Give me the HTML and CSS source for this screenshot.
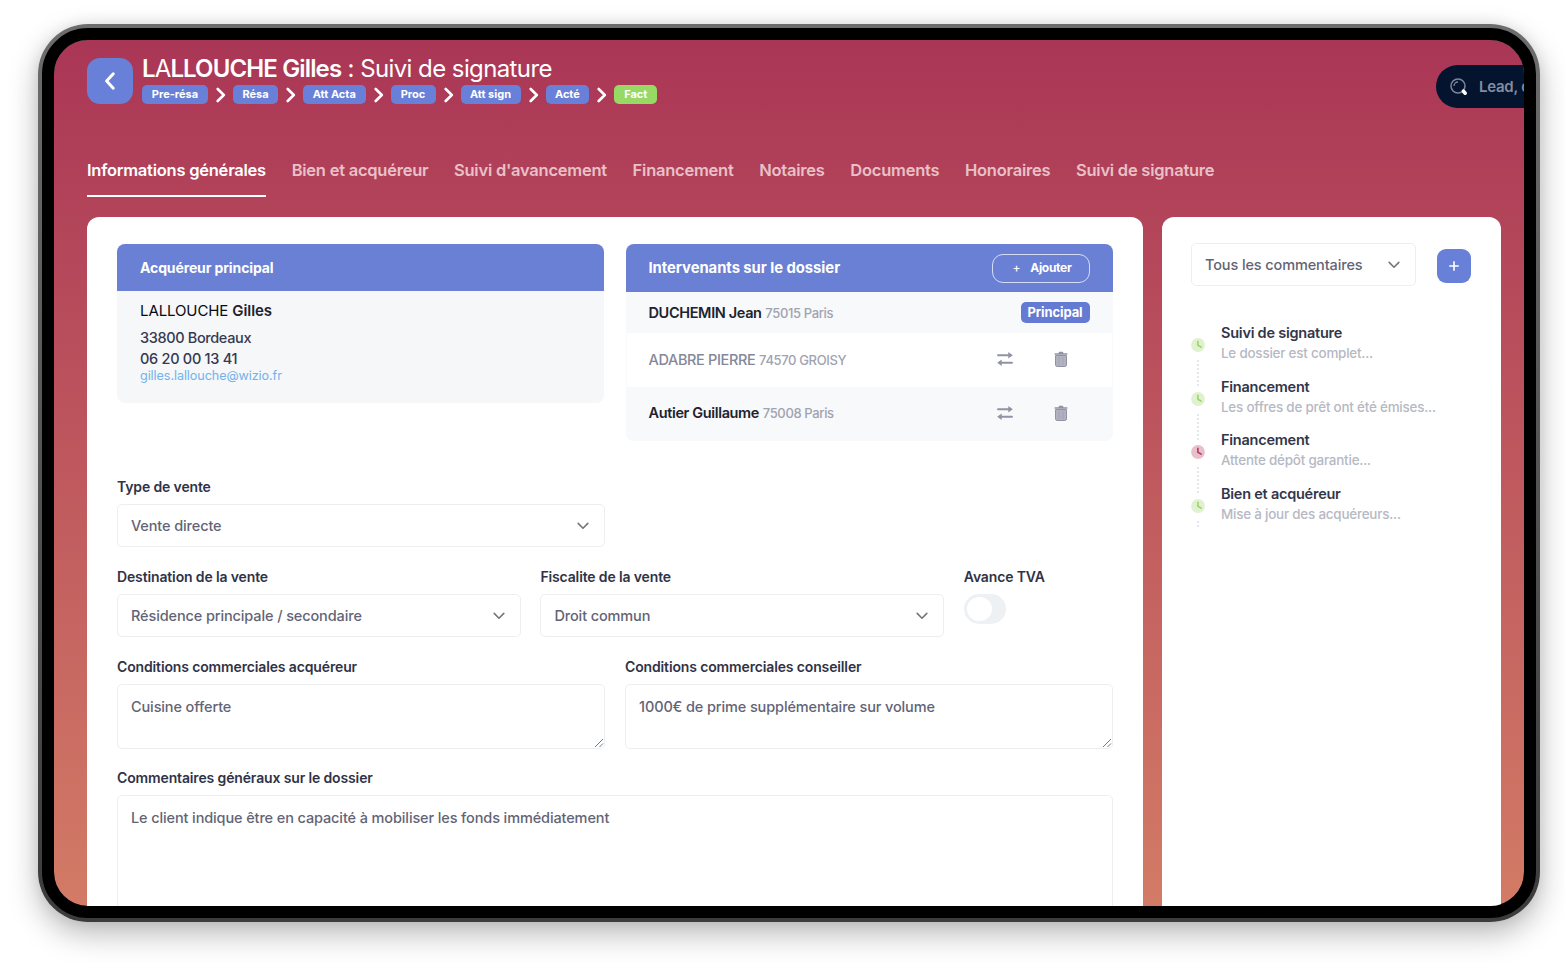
FILE: index.html
```html
<!DOCTYPE html>
<html lang="fr">
<head>
<meta charset="utf-8">
<title>Suivi de signature</title>
<link rel="stylesheet" href="styles.css">
</head>
<body>
<svg class="defs" width="0" height="0" aria-hidden="true">
  <symbol id="down" viewBox="0 0 12 8"><path d="M1.2 1.4 6 6.2 10.8 1.4" fill="none" stroke="currentColor" stroke-width="1.6" stroke-linecap="round" stroke-linejoin="round"/></symbol>
  <symbol id="right" viewBox="0 0 10 16"><path d="M1.7 2 7.8 8 1.7 14" fill="none" stroke="currentColor" stroke-width="2.6" stroke-linecap="round" stroke-linejoin="round"/></symbol>
  <symbol id="swap" viewBox="0 0 16 16"><path d="M1 4.3h11M4 11.8h11" fill="none" stroke="currentColor" stroke-width="1.9" stroke-linecap="round"/><path d="M11.3 1v6.6L15.8 4.3zM4.7 8.5v6.6L.2 11.8z" fill="currentColor"/></symbol>
  <symbol id="trash" viewBox="0 0 14 16"><path d="M.6 2.2h3.8L5.2.8h3.6l.8 1.4h3.8v1.5H.6z" fill="currentColor"/><path d="M1.5 4.7h11v9.1a1.7 1.7 0 0 1-1.7 1.7H3.2a1.7 1.7 0 0 1-1.7-1.7z" fill="currentColor" fill-opacity=".7"/><path d="M1.5 4.5h11v9.3a1.7 1.7 0 0 1-1.7 1.7H3.2a1.7 1.7 0 0 1-1.7-1.7z" fill="none" stroke="currentColor" stroke-width="1"/><path d="M5 6v8M9 6v8" fill="none" stroke="currentColor" stroke-width=".8" opacity=".6"/></symbol>
  <symbol id="clock" viewBox="0 0 14 14"><circle cx="7" cy="7" r="6.9" fill="currentColor" opacity=".32"/><path d="M6.9 3.2v4l3.3 1.9" fill="none" stroke="currentColor" stroke-width="1.6" stroke-linecap="round" stroke-linejoin="round"/></symbol>
  <symbol id="grip" viewBox="0 0 10 10"><path d="M1 9 9 1M5.5 9 9 5.5" fill="none" stroke="#777" stroke-width="1"/></symbol>
</svg>
<div class="device">
  <div class="screen">
    <header class="top">
      <div class="back"><svg width="14" height="20" viewBox="0 0 14 20"><path d="M10.3 2.8 3.6 10l6.7 7.2" fill="none" stroke="#fff" stroke-width="3" stroke-linecap="round" stroke-linejoin="round"/></svg></div>
      <div class="heading">
        <h1 class="title"><b>L<span class="thin">A</span>LLOUCHE Gilles</b> : Suivi de signature</h1>
        <div class="steps">
          <span class="step w66">Pre-résa</span><svg><use href="#right"/></svg>
          <span class="step w45">Résa</span><svg><use href="#right"/></svg>
          <span class="step w63">Att Acta</span><svg><use href="#right"/></svg>
          <span class="step w45">Proc</span><svg><use href="#right"/></svg>
          <span class="step w60">Att sign</span><svg><use href="#right"/></svg>
          <span class="step w44">Acté</span><svg><use href="#right"/></svg>
          <span class="step done">Fact</span>
        </div>
      </div>
      <div class="search">
        <svg width="20" height="20" viewBox="0 0 20 20"><circle cx="9" cy="9" r="7" fill="none" stroke="#7c859a" stroke-width="1.5"/><path d="M5 9a4 4 0 0 1 4-4" fill="none" stroke="#7c859a" stroke-width="1.3"/><path d="m14.4 14.2 1.8 2" stroke="#fff" stroke-width="3.6" stroke-linecap="round"/></svg>
        <span>Lead, c</span>
      </div>
    </header>
    <nav class="tabs">
      <a class="tab active">Informations générales</a>
      <a class="tab">Bien et acquéreur</a>
      <a class="tab">Suivi d'avancement</a>
      <a class="tab">Financement</a>
      <a class="tab">Notaires</a>
      <a class="tab">Documents</a>
      <a class="tab">Honoraires</a>
      <a class="tab">Suivi de signature</a>
    </nav>
    <div class="columns">
      <main class="panel main">
        <div class="cards">
          <section class="card buyer">
            <h2 class="card-head">Acquéreur principal</h2>
            <div class="buyer-body">
              <p class="name"><span>LALLOUCHE</span> <b>Gilles</b></p>
              <p class="line">33800 Bordeaux</p>
              <p class="line">06 20 00 13 41</p>
              <p class="mail">gilles.lallouche@wizio.fr</p>
            </div>
          </section>
          <section class="card people">
            <div class="card-head"><span class="head-label">Intervenants sur le dossier</span><span class="add"><i>+</i>Ajouter</span></div>
            <div class="person first"><span><b>DUCHEMIN Jean</b> <small>75015 Paris</small></span><em class="tag">Principal</em></div>
            <div class="person plain"><span><b>ADABRE PIERRE</b> <small>74570 GROISY</small></span><span class="acts"><svg class="ic-swap"><use href="#swap"/></svg><svg class="ic-trash"><use href="#trash"/></svg></span></div>
            <div class="person"><span><b>Autier Guillaume</b> <small>75008 Paris</small></span><span class="acts"><svg class="ic-swap"><use href="#swap"/></svg><svg class="ic-trash"><use href="#trash"/></svg></span></div>
          </section>
        </div>
        <div class="row">
          <div class="field half"><label>Type de vente</label><div class="select">Vente directe<svg><use href="#down"/></svg></div></div>
        </div>
        <div class="row">
          <div class="field third"><label>Destination de la vente</label><div class="select">Résidence principale / secondaire<svg><use href="#down"/></svg></div></div>
          <div class="field third"><label>Fiscalite de la vente</label><div class="select">Droit commun<svg><use href="#down"/></svg></div></div>
          <div class="field"><label>Avance TVA</label><div class="toggle"></div></div>
        </div>
        <div class="row">
          <div class="field half"><label>Conditions commerciales acquéreur</label><div class="area">Cuisine offerte<svg><use href="#grip"/></svg></div></div>
          <div class="field half"><label>Conditions commerciales conseiller</label><div class="area">1000€ de prime supplémentaire sur volume<svg><use href="#grip"/></svg></div></div>
        </div>
        <div class="row last">
          <div class="field full"><label>Commentaires généraux sur le dossier</label><div class="area tall">Le client indique être en capacité à mobiliser les fonds immédiatement</div></div>
        </div>
      </main>
      <aside class="panel side">
        <div class="filter">
          <div class="select small">Tous les commentaires<svg><use href="#down"/></svg></div>
          <div class="plus"><svg width="12" height="12" viewBox="0 0 12 12"><path d="M6 1.2v9.6M1.2 6h9.6" stroke="#fff" stroke-width="1.6"/></svg></div>
        </div>
        <ul class="feed">
          <li><div class="rail"><svg class="clock"><use href="#clock"/></svg></div><div><b>Suivi de signature</b><p>Le dossier est complet...</p></div></li>
          <li><div class="rail"><svg class="clock"><use href="#clock"/></svg></div><div><b>Financement</b><p>Les offres de prêt ont été émises...</p></div></li>
          <li><div class="rail"><svg class="clock red"><use href="#clock"/></svg></div><div><b>Financement</b><p>Attente dépôt garantie...</p></div></li>
          <li><div class="rail end"><svg class="clock"><use href="#clock"/></svg></div><div><b>Bien et acquéreur</b><p>Mise à jour des acquéreurs...</p></div></li>
        </ul>
      </aside>
    </div>
  </div>
</div>
</body>
</html>
```
FILE: styles.css
```css
* { box-sizing: border-box; }
html, body { margin: 0; height: 963px; overflow: hidden; background: #fff; }
body { padding: 24px 25px 0 38px; font-family: Inter, "Liberation Sans", sans-serif; color: #2f3044; }
h1, h2, p, ul { margin: 0; padding: 0; }
svg { display: block; flex: none; }
.defs { position: absolute; }

.device { width: 1502px; height: 898px; padding: 4px; border-radius: 50px; background: linear-gradient(#6d6d6d, #3c3c3c); box-shadow: 0 12px 30px rgba(0,0,0,.27), 0 0 14px rgba(0,0,0,.08); }
.screen { height: 890px; border: 12px solid #000; border-radius: 46px; overflow: hidden; background: linear-gradient(#aa3656, #d37b66) padding-box; }

.top { display: flex; height: 66px; padding: 18px 0 0 33px; white-space: nowrap; }
.back { width: 46px; height: 46px; flex: none; border-radius: 13px; background: #6980d8; display: flex; align-items: center; justify-content: center; }
.heading { width: 1294px; margin-left: 9px; flex: none; }
.title { height: 27px; margin-top: -3px; font-size: 24px; line-height: 28px; font-weight: 400; color: #fff; letter-spacing: -.62px; word-spacing: .2px; }
.title b { font-weight: 600; letter-spacing: -.88px; }
.title .thin { font-weight: 400; }
.steps { display: flex; align-items: center; margin-top: 3px; }
.steps svg { width: 10px; height: 16px; margin: 0 7px 0 8px; color: #fff; }
.step { height: 19px; border-radius: 5px; background: #6980d8; color: #fff; font-size: 11px; font-weight: 700; line-height: 18px; text-align: center; }
.w66 { width: 66px; } .w45 { width: 45px; } .w63 { width: 62.5px; } .w60 { width: 60px; } .w44 { width: 43.8px; }
.done { width: 43px; background: #98d965; }
.search { display: flex; align-items: center; flex: none; width: 240px; height: 43px; margin-top: 7px; padding-left: 13px; border-radius: 22px; background: #04142f; color: #858da0; font-size: 15px; letter-spacing: -.25px; font-weight: 600; }
.search span { margin-left: 10px; }

.tabs { display: flex; gap: 25.7px; height: 91px; padding: 0 0 0 33px; align-items: flex-end; white-space: nowrap; }
.tab { height: 41px; font-size: 16.5px; line-height: 28px; font-weight: 600; letter-spacing: -.24px; color: #e9c0c8; border-bottom: 2px solid transparent; }
.tab.active { color: #fff; border-color: #fff; }

.columns { display: flex; gap: 19px; padding: 20px 0 0 33px; }
.panel { height: 720px; flex: none; border-radius: 12px; background: #fff; }
.main { width: 1056px; padding: 27px 30px 0; }
.side { width: 339px; padding: 26px 29px 0; }

.cards { display: flex; gap: 22px; height: 234px; align-items: flex-start; }
.card { width: 487px; border-radius: 8px; overflow: hidden; background: #f5f7f9; }
.people { width: 487px; height: 197px; margin-left: -.5px; background: #f7f9fa; }
.buyer { height: 159px; }
.card-head { display: flex; justify-content: space-between; align-items: center; height: 47px; padding: 0 23px; background: #6980d4; color: #fff; font-size: 14px; line-height: 46px; font-weight: 700; letter-spacing: -.12px; }
.people .card-head { height: 48px; font-size: 14.8px; letter-spacing: -.03px; }
.add { width: 98px; height: 29px; border: 1.5px solid #d5dcf7; border-radius: 11px; font-size: 12px; letter-spacing: -.3px; line-height: 26px; text-align: center; padding-left: 3px; }
.add i { margin-right: 10px; font-style: normal; font-weight: 500; }
.buyer-body { padding: 9px 23px; }
.name { height: 22px; font-size: 15px; line-height: 22px; letter-spacing: -.1px; color: #080a14; }
.name b { font-weight: 600; color: #1d2235; }
.line { height: 21px; font-size: 14.5px; line-height: 21px; font-weight: 500; letter-spacing: -.36px; color: #363950; }
.line + .line { height: 20px; letter-spacing: -.28px; }
.name + .line { margin-top: 5px; }
.mail { height: 16px; font-size: 12.6px; line-height: 15px; letter-spacing: -.08px; color: #73b2ec; }
.person { display: flex; align-items: center; justify-content: space-between; height: 54px; padding: 0 23px 3px; font-size: 14.5px; letter-spacing: -.36px; background: #f7f9fa; white-space: nowrap; }
.person b { font-weight: 600; color: #20222f; }
.person small { font-size: 13px; font-weight: 500; color: #a0a3b1; }
.person.first { height: 41px; padding-bottom: 0; }
.person.plain { background: #fff; padding-bottom: 2px; margin: 0 1px; padding-left: 22px; padding-right: 22px; }
.person.plain b { font-weight: 500; color: #85879a; }
.tag { width: 69px; height: 21px; border-radius: 5px; background: #657ad2; color: #fff; font-size: 13px; font-style: normal; line-height: 21px; letter-spacing: -.1px; font-weight: 700; text-align: center; }
.acts { display: flex; gap: 41px; padding-right: 22px; color: #9193a4; }
.ic-swap { width: 16px; height: 16px; }
.ic-trash { width: 14px; height: 16px; }

.row { display: flex; gap: 20px; height: 90px; }
.row + .row + .row { height: 111px; }
.half { width: 488px; } .third { width: 403.6px; margin-right: -.2px; } .full { width: 996px; }
label { display: block; height: 26px; font-size: 14px; line-height: 17px; font-weight: 600; letter-spacing: -.14px; color: #303347; }
.select { display: flex; align-items: center; justify-content: space-between; height: 43px; padding: 0 15px 0 13px; border: 1.5px solid #eceff1; border-radius: 5px; color: #626475; font-size: 14.5px; font-weight: 500; letter-spacing: -.12px; white-space: nowrap; }
.select svg { width: 12px; height: 8px; color: #74757b; }
.toggle { width: 42px; height: 30px; border: 3px solid #eef1f4; border-right-width: 14px; border-radius: 15px; background: #eef1f4; display: flex; }
.toggle::before { content: ""; width: 25px; height: 24px; border-radius: 50%; background: #fff; }
.area { position: relative; height: 65px; padding: 12px 13px; border: 1.5px solid #eceff1; border-radius: 5px; color: #626475; font-size: 14.5px; line-height: 19px; font-weight: 500; letter-spacing: -.12px; }
.area svg { position: absolute; right: 0; bottom: 0; width: 10px; height: 10px; }
.tall { height: 160px; }

.filter { display: flex; gap: 21px; align-items: center; }
.select.small { width: 225px; }
.plus { width: 34px; height: 34px; margin-top: 2px; border-radius: 9px; background: #6980d8; display: flex; align-items: center; justify-content: center; }
.feed { margin-top: 36px; list-style: none; }
.feed li { display: flex; gap: 16px; height: 53.5px; }
.feed b { display: block; font-size: 14.5px; line-height: 21px; font-weight: 600; letter-spacing: -.24px; color: #33364a; }
.feed p { font-size: 13.4px; line-height: 20px; font-weight: 500; letter-spacing: -.2px; color: #b6b8c3; white-space: nowrap; }
.rail { display: flex; flex-direction: column; align-items: center; width: 14px; padding-top: 16px; }
.rail::after { content: ""; flex: none; width: 2px; height: 28px; margin-top: 8px; background: repeating-linear-gradient(#e4e6eb 0 2px, transparent 2px 4px); }
.rail.end::after { height: 6px; }
.clock { width: 14px; height: 14px; color: #9bd567; }
.clock.red { color: #b73a61; }
```
